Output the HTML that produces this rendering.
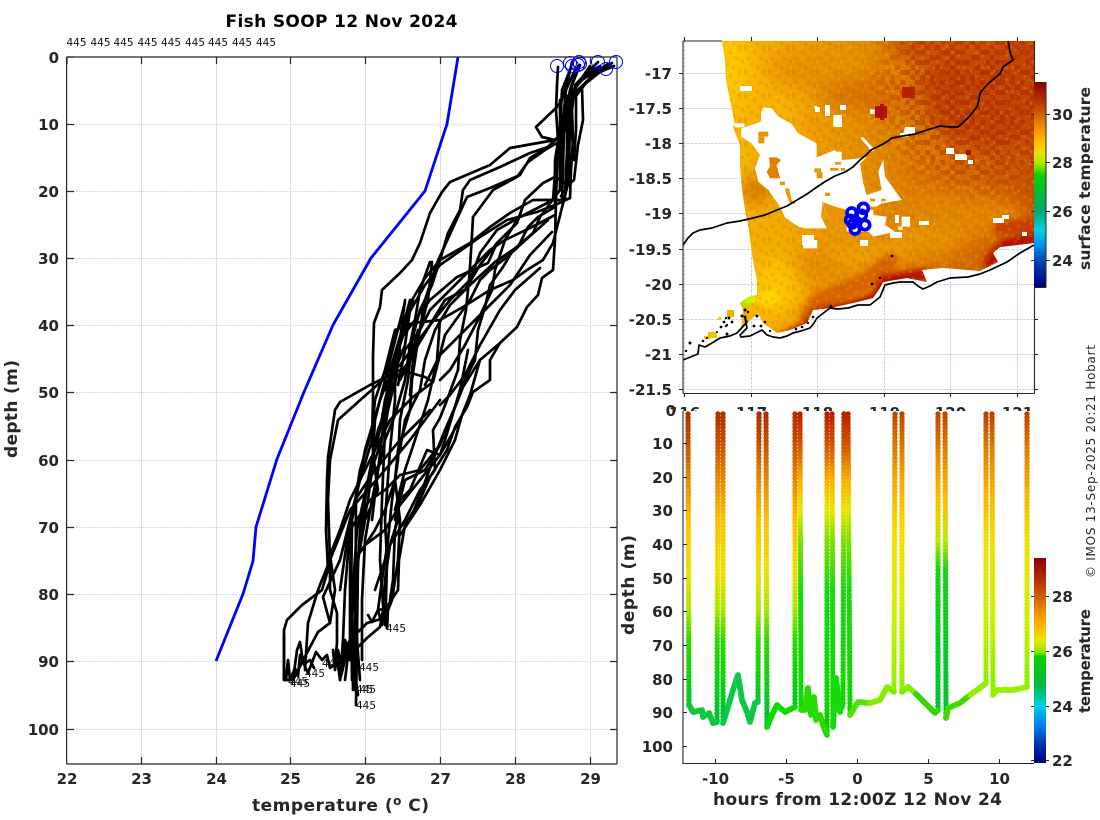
<!DOCTYPE html>
<html><head><meta charset="utf-8"><title>Fish SOOP 12 Nov 2024</title>
<style>
html,body{margin:0;padding:0;background:#fff}
svg{display:block}
text{font-family:"DejaVu Sans","Liberation Sans",sans-serif;fill:#262626}
.t{font-size:15px;font-weight:bold}
.l{font-size:17px;font-weight:bold}
.s{font-size:10.5px;fill:#111}
.pr{fill:none;stroke:#000;stroke-width:2.7;stroke-linejoin:round;stroke-linecap:round}
.d{fill:none;stroke-width:5.4;stroke-linecap:round;stroke-linejoin:round;stroke-dasharray:0 3.4}
.tr{fill:none;stroke-width:5.8;stroke-linejoin:round;stroke-linecap:round}
</style></head><body>
<svg width="1100" height="820" viewBox="0 0 1100 820" xmlns="http://www.w3.org/2000/svg">
<defs>
<clipPath id="d"><polygon points="722,41 1034,41 1034,243 1000,247 993,253 998,262 980,271 967,270 943,268 922,270 927,282 907,278 883,282 880,288 873,298 853,303 830,308 813,310 807,323 790,330 777,333 763,323 758,313 745,325 741,330 743,310 740,303 748,297 757,295 757,280 753,260 750,240 749,230 745,210 742,190 740,165 740,145 733,127 735,125 730,100 726,80 725,60"/></clipPath>
<filter id="b8" x="-30%" y="-30%" width="160%" height="160%"><feGaussianBlur stdDeviation="9"/></filter>
<filter id="b3" x="-30%" y="-30%" width="160%" height="160%"><feGaussianBlur stdDeviation="3"/></filter>
<linearGradient id="h" gradientUnits="userSpaceOnUse" x1="722" y1="0" x2="1034" y2="0">
<stop offset="0" stop-color="#f8bc00"/><stop offset=".2" stop-color="#f0a400"/><stop offset=".5" stop-color="#e08800"/><stop offset=".75" stop-color="#d46c00"/><stop offset="1" stop-color="#c85200"/></linearGradient>
<pattern id="chk" width="40" height="40" patternUnits="userSpaceOnUse">
<path fill="#a81c00" d="M0 0h5v5H0zM10 0h5v5h-5zM20 0h5v5h-5zM35 0h5v5h-5zM5 5h5v5H5zM15 5h5v5h-5zM30 5h5v5h-5zM0 10h5v5H0zM20 10h5v5h-5zM25 10h5v5h-5zM35 10h5v5h-5zM10 15h5v5h-5zM15 15h5v5h-5zM30 15h5v5h-5zM0 20h5v5H0zM5 20h5v5H5zM25 20h5v5h-5zM35 20h5v5h-5zM15 25h5v5h-5zM30 25h5v5h-5zM5 30h5v5H5zM20 30h5v5h-5zM25 30h5v5h-5zM35 30h5v5h-5zM0 35h5v5H0zM10 35h5v5h-5zM30 35h5v5h-5z"/>
</pattern>
<pattern id="nz" width="24" height="24" patternUnits="userSpaceOnUse">
<path fill="#b85000" opacity=".16" d="M0 0h3v3H0zM9 3h3v3H9zM18 0h3v3h-3zM3 9h3v3H3zM15 9h3v3h-3zM21 12h3v3h-3zM6 15h3v3H6zM12 18h3v3h-3zM0 21h3v3H0zM18 21h3v3h-3z"/>
<path fill="#ffd000" opacity=".16" d="M6 0h3v3H6zM15 3h3v3h-3zM21 6h3v3h-3zM9 9h3v3H9zM0 12h3v3H0zM15 15h3v3h-3zM3 18h3v3H3zM21 18h3v3h-3zM9 21h3v3H9z"/>
</pattern>
<radialGradient id="fade" gradientUnits="userSpaceOnUse" cx="985" cy="90" r="125"><stop offset="0" stop-color="#fff"/><stop offset=".65" stop-color="#aaa"/><stop offset="1" stop-color="#000"/></radialGradient>
<mask id="mk" maskUnits="userSpaceOnUse" x="860" y="30" width="180" height="230"><rect x="860" y="30" width="180" height="230" fill="url(#fade)"/></mask>
<linearGradient id="c1" gradientUnits="userSpaceOnUse" x1="0" y1="82" x2="0" y2="287">
<stop offset="0" stop-color="#8b0000"/><stop offset=".088" stop-color="#b83000"/><stop offset=".156" stop-color="#d06000"/><stop offset=".234" stop-color="#f59800"/><stop offset=".297" stop-color="#ffc000"/><stop offset=".341" stop-color="#f0e000"/><stop offset=".395" stop-color="#b0e800"/><stop offset=".454" stop-color="#10d000"/><stop offset=".551" stop-color="#00b840"/><stop offset=".629" stop-color="#00a870"/><stop offset=".722" stop-color="#00d0e0"/><stop offset=".795" stop-color="#0090f0"/><stop offset=".878" stop-color="#0040b0"/><stop offset="1" stop-color="#000080"/></linearGradient>
<linearGradient id="c2" gradientUnits="userSpaceOnUse" x1="0" y1="558" x2="0" y2="763">
<stop offset="0" stop-color="#8b0000"/><stop offset=".107" stop-color="#b83000"/><stop offset=".190" stop-color="#d06000"/><stop offset=".278" stop-color="#f59800"/><stop offset=".351" stop-color="#ffc000"/><stop offset=".400" stop-color="#e8e800"/><stop offset=".459" stop-color="#90e800"/><stop offset=".478" stop-color="#10d000"/><stop offset=".620" stop-color="#00b840"/><stop offset=".722" stop-color="#00d0e0"/><stop offset=".815" stop-color="#0080f0"/><stop offset=".912" stop-color="#0030b0"/><stop offset="1" stop-color="#000080"/></linearGradient>
<linearGradient id="g1" gradientUnits="userSpaceOnUse" x1="0" y1="410" x2="0" y2="730">
<stop offset="0" stop-color="#b02a00"/><stop offset=".094" stop-color="#c84a00"/><stop offset=".219" stop-color="#e88a00"/><stop offset=".344" stop-color="#ffc000"/><stop offset=".5" stop-color="#f0e000"/><stop offset=".625" stop-color="#a8e800"/><stop offset=".719" stop-color="#30d800"/><stop offset=".844" stop-color="#10d010"/><stop offset="1" stop-color="#00b840"/></linearGradient>
<linearGradient id="g2" gradientUnits="userSpaceOnUse" x1="0" y1="410" x2="0" y2="735">
<stop offset="0" stop-color="#b81800"/><stop offset=".123" stop-color="#d86000"/><stop offset=".215" stop-color="#fcb000"/><stop offset=".308" stop-color="#e8e800"/><stop offset=".4" stop-color="#80e000"/><stop offset=".554" stop-color="#18d810"/><stop offset=".892" stop-color="#10d800"/><stop offset="1" stop-color="#18c000"/></linearGradient>
<linearGradient id="g3" gradientUnits="userSpaceOnUse" x1="0" y1="410" x2="0" y2="700">
<stop offset="0" stop-color="#c04000"/><stop offset=".103" stop-color="#d87000"/><stop offset=".241" stop-color="#f8a800"/><stop offset=".414" stop-color="#fcd800"/><stop offset=".655" stop-color="#d8f000"/><stop offset=".931" stop-color="#98f000"/><stop offset="1" stop-color="#80f000"/></linearGradient>
<linearGradient id="g4" gradientUnits="userSpaceOnUse" x1="0" y1="410" x2="0" y2="720">
<stop offset="0" stop-color="#c04000"/><stop offset=".161" stop-color="#e89000"/><stop offset=".29" stop-color="#ffc000"/><stop offset=".419" stop-color="#c0e800"/><stop offset=".516" stop-color="#10d810"/><stop offset="1" stop-color="#00c030"/></linearGradient>
<linearGradient id="g5" gradientUnits="userSpaceOnUse" x1="0" y1="410" x2="0" y2="690">
<stop offset="0" stop-color="#c03800"/><stop offset=".143" stop-color="#e08000"/><stop offset=".286" stop-color="#fab000"/><stop offset=".464" stop-color="#f0e000"/><stop offset=".75" stop-color="#c8f000"/><stop offset=".964" stop-color="#90f000"/><stop offset="1" stop-color="#90f000"/></linearGradient>
</defs>
<rect width="1100" height="820" fill="#fff"/>

<!-- left panel grid -->
<g fill="none" stroke-width="1">
<path stroke="#d3daf5" stroke-dasharray="2 1" d="M67 124.5H617M67 191.5H617M67 258.5H617M67 325.5H617M67 392.5H617M67 460.5H617M67 527.5H617M67 594.5H617M67 661.5H617M67 729.5H617"/>
<path stroke="#d3daf5" stroke-dasharray="2 2" d="M141.5 57V764M216.5 57V764M290.5 57V764M365.5 57V764M440.5 57V764M515.5 57V764M590.5 57V764"/>
<path stroke="#f2dccf" stroke-dasharray="2 2" stroke-dashoffset="2" d="M141.5 57V764M216.5 57V764M290.5 57V764M365.5 57V764M440.5 57V764M515.5 57V764M590.5 57V764"/>
</g>

<!-- blue mean profile -->
<polyline fill="none" stroke="#0000ff" stroke-width="2.8" stroke-linejoin="round" points="458,57 447,124 425,191 371,258 333,325 304,392 277,459 256,527 253,561 243,594 216,661"/>

<!-- profiles -->
<g class="pr">
<polyline class="pr" points="558,67 557,85 556,110 558,140 557,170 556,200 555,240 553,270 542,278 538,295 527,307 517,327 500,343 490,360 490,380 473,392 467,407 455,427 447,450 430,477 420,500 405,525 399,560 398,590 388,605 387,628"/>
<polyline class="pr" points="600,66 585,75 575,85 572,110 573,140 571,170 570,198 555,205 537,212 507,220 480,237 440,265 425,285 405,320 395,360 385,400 380,430 372,460 362,510 358,560 355,620 354,680"/>
<polyline class="pr" points="612,63 590,78 578,90 570,100 568,135 566,170 565,200 533,200 510,213 490,227 470,243 440,260 425,278 412,300 400,345 395,385 378,430 370,470 360,530 356,600 355,660 355,690"/>
<polyline class="pr" points="605,68 590,78 582,88 583,120 578,145 574,180 568,185 555,177 543,183 525,200 517,223 497,243 488,263 457,277 430,300 415,320 410,345 405,380 395,415 385,440 378,470 372,500 365,540 362,600 362,660"/>
<polyline class="pr" points="572,62 568,80 562,100 557,107 536,127 542,137 555,140 510,148 490,165 450,182 442,192 430,213 420,243 412,260 400,273 382,290 380,307 374,323 373,357 373,400 372,440 375,470 378,490 365,520 358,560 357,640 356,705"/>
<polyline class="pr" points="580,65 572,85 568,110 565,130 548,147 530,153 500,167 470,180 463,190 460,210 448,233 440,260 432,285 420,310 412,340 408,380 400,420 398,460 392,500 388,540 382,580 378,610 388,608 387,628"/>
<polyline class="pr" points="575,70 566,90 563,120 560,135 548,147 530,158 520,175 490,188 467,197 455,223 437,263 425,300 418,340 412,380 410,410 398,450 395,480 400,520 398,560 392,600 385,618 367,623 350,640 345,680"/>
<polyline class="pr" points="578,66 570,90 565,120 562,140 545,150 528,162 517,177 493,190 473,217 472,235 470,267 469,280 466,310 460,340 458,370 447,400 440,418 433,430 435,470 420,490 405,520 390,545 385,580 383,610 380,627 367,638 355,650 347,643 340,677"/>
<polyline class="pr" points="598,62 578,82 570,100 572,130 573,150 569,180 553,243 543,260 527,270 513,280 490,290 463,307 440,320 413,323 395,330 385,370 375,400 372,430 360,470 352,520 351,600 352,680"/>
<polyline class="pr" points="590,66 575,88 566,105 561,150 560,190 540,217 533,233 513,250 503,267 490,285 485,307 478,330 475,360 460,390 445,440 440,455 427,450 410,490 400,500 395,530 393,580 390,600"/>
<polyline class="pr" points="570,70 562,90 560,130 555,160 555,207 538,217 528,227 518,247 507,257 490,270 480,280 470,300 445,335 433,382 425,377 400,370 370,385 340,402 335,410 328,457 327,480 326,530 328,570 322,590 302,605 287,620 284,630 284,680"/>
<polyline class="pr" points="566,100 556,160 553,200 520,217 497,230 480,253 470,280 450,300 430,325 415,345 400,365 358,402 338,420 330,460 328,500 330,560 330,590 337,613 337,643 335,662"/>
<polyline class="pr" points="433,382 413,397 390,420 370,460 350,500 340,530 330,555 335,590 330,623 318,632 310,647 293,680"/>
<polyline class="pr" points="440,400 410,440 385,470 350,510 330,560 318,590 308,623 305,670"/>
<polyline class="pr" points="430,410 400,440 375,470 355,500 340,560 323,597 330,623"/>
<polyline class="pr" points="440,445 420,470 400,475 385,490 370,500 350,530 345,590 343,640 340,680"/>
<polyline class="pr" points="460,420 440,455 420,480 400,505 385,530 365,545 355,560"/>
<polyline class="pr" points="500,343 480,360 463,387 450,420 440,445 425,470 405,480 395,520"/>
<polyline class="pr" points="285,680 293,680 297,650 300,642 303,662 308,673 316,652 322,660 327,655 330,668 340,660 345,650 350,640 340,680 338,665 352,650"/>
<polyline class="pr" points="410,310 405,345 395,370 395,400 390,450 385,520 387,560 386,600 385,625"/>
<polyline class="pr" points="405,300 400,340 392,380 385,430 382,500 380,560 383,605"/>
<polyline class="pr" points="405,302 390,360 375,420 372,470 368,500 360,540 354,600 360,680"/>
<polyline class="pr" points="400,350 380,400 365,450 352,520 350,570 350,640 358,695"/>
<polyline class="pr" points="418,330 410,360 395,380 380,445 368,480 357,530 352,600 353,690"/>
<polyline class="pr" points="608,64 592,74 580,80 574,92 570,120 569,170 567,188 561,196"/>
<polyline class="pr" points="596,70 582,80 568,96 564,130 563,170 562,200"/>
<polyline class="pr" points="614,66 600,72 585,84 576,96 576,130 574,160"/>
<polyline class="pr" points="555,215 530,228 505,240 490,250 470,270 450,290 430,310 420,330 413,360 410,395"/>
<polyline class="pr" points="548,220 520,245 495,262 470,285 450,305 435,330 425,360 420,390 405,420 400,450"/>
<polyline class="pr" points="552,232 530,255 510,285 495,300 475,320 460,335 440,355 425,385"/>
<polyline class="pr" points="540,268 515,290 500,310 480,345 465,375 450,395 440,405"/>
<polyline class="pr" points="520,215 505,240 495,270 492,290 478,320 465,345 450,370 440,380"/>
<polyline class="pr" points="497,243 480,265 465,290 445,300 430,325 418,345 400,380"/>
<polyline class="pr" points="430,262 420,290 415,320 400,340 395,370 385,390"/>
<polyline class="pr" points="432,262 428,300 420,330 405,350 398,385"/>
<polyline class="pr" points="413,300 405,330 395,360 388,400 383,420"/>
<polyline class="pr" points="410,300 402,330 390,370 384,420 378,470 372,520"/>
<polyline class="pr" points="440,320 437,360 428,400 415,440 405,470 395,510"/>
<polyline class="pr" points="468,350 458,400 445,430 433,460 422,490 410,520"/>
<polyline class="pr" points="480,360 470,395 462,415 455,440 440,470 420,505 400,535"/>
<polyline class="pr" points="372,440 360,480 350,520 345,555 340,590"/>
<polyline class="pr" points="395,480 385,510 375,530 362,550"/>
<polyline class="pr" points="398,520 385,560 375,590"/>
<polyline class="pr" points="353,640 350,660 345,640 342,672 338,650 335,670 333,650"/>
<polyline class="pr" points="387,628 385,612 382,625 378,610 372,622 368,615"/>
<polyline class="pr" points="286,680 288,660 290,680 295,668 298,676 300,655 304,664 310,660 314,668"/>
<polyline class="pr" stroke-width="4" points="560,100 560,190"/>
<polyline class="pr" stroke-width="4" points="567,100 567,180"/>
<polyline class="pr" stroke-width="4" points="356,500 355,680"/>
<polyline class="pr" stroke-width="4" points="284,635 284,680"/>
</g>

<!-- circles -->
<g fill="none" stroke="#0000ff" stroke-width="1">
<circle cx="557" cy="66" r="6.5"/><circle cx="570" cy="63" r="6.5"/><circle cx="572" cy="66" r="6.5"/><circle cx="579" cy="62" r="6.5"/><circle cx="578" cy="65" r="6.5"/><circle cx="580" cy="64" r="6.5"/><circle cx="598" cy="62" r="6.5"/><circle cx="606" cy="69" r="6.5"/><circle cx="616" cy="62" r="6.5"/>
</g>

<!-- left axes -->
<g fill="none" stroke="#262626" stroke-width="1.2">
<path d="M66.6 57H617M617 57V764M66.6 57V764M66.6 764H617"/>
<path d="M67 57H74M67 124.5H74M67 191.5H74M67 258.5H74M67 325.5H74M67 392.5H74M67 460.5H74M67 527.5H74M67 594.5H74M67 661.5H74M67 729.5H74"/>
<path d="M617 124.5H610M617 191.5H610M617 258.5H610M617 325.5H610M617 392.5H610M617 460.5H610M617 527.5H610M617 594.5H610M617 661.5H610M617 729.5H610"/>
<path d="M67 57V64M141.5 57V64M216.5 57V64M290.5 57V64M365.5 57V64M440.5 57V64M515.5 57V64M590.5 57V64"/>
<path d="M141.5 764V757M216.5 764V757M290.5 764V757M365.5 764V757M440.5 764V757M515.5 764V757M590.5 764V757"/>
</g>
<g class="t" text-anchor="end">
<text class="t" x="59" y="63">0</text><text class="t" x="59" y="130">10</text><text class="t" x="59" y="197">20</text><text class="t" x="59" y="264">30</text><text class="t" x="59" y="331">40</text><text class="t" x="59" y="398">50</text><text class="t" x="59" y="466">60</text><text class="t" x="59" y="533">70</text><text class="t" x="59" y="600">80</text><text class="t" x="59" y="667">90</text><text class="t" x="59" y="735">100</text>
</g>
<g text-anchor="middle">
<text class="t" x="67" y="784">22</text><text class="t" x="141.5" y="784">23</text><text class="t" x="216.5" y="784">24</text><text class="t" x="290.5" y="784">25</text><text class="t" x="365.5" y="784">26</text><text class="t" x="440.5" y="784">27</text><text class="t" x="515.5" y="784">28</text><text class="t" x="590.5" y="784">29</text>
</g>
<text class="l" x="341.5" y="27" text-anchor="middle" textLength="232" style="fill:#000">Fish SOOP 12 Nov 2024</text>
<text class="l" x="252" y="811" textLength="177">temperature (<tspan dy="-6" font-size="12">o</tspan><tspan dy="6"> C)</tspan></text>
<text class="l" transform="translate(17,458) rotate(-90)" textLength="98">depth (m)</text>

<g>
<text class="s" x="66.5" y="46">445</text><text class="s" x="90.5" y="46">445</text><text class="s" x="113.5" y="46">445</text><text class="s" x="137.5" y="46">445</text><text class="s" x="161" y="46">445</text><text class="s" x="185" y="46">445</text><text class="s" x="208" y="46">445</text><text class="s" x="232" y="46">445</text><text class="s" x="256" y="46">445</text>
<text class="s" x="386" y="632">445</text><text class="s" x="359" y="671">445</text><text class="s" x="353" y="693">445</text><text class="s" x="356" y="693">445</text><text class="s" x="356" y="709">445</text><text class="s" x="288" y="685">445</text><text class="s" x="290" y="687">445</text><text class="s" x="305" y="677">445</text><text class="s" x="322" y="667">445</text>
</g>

<!-- MAP -->
<g fill="none" stroke="#c9d2f2" stroke-width="1" stroke-dasharray="3 1">
<path d="M683 73.5H1034M683 108.5H1034M683 143.5H1034M683 178.5H1034M683 213.5H1034M683 249.5H1034M683 284.5H1034M683 319.5H1034M683 354.5H1034M683 389.5H1034"/>
<path d="M684.5 41V393M751.5 41V393M817.5 41V393M884.5 41V393M950.5 41V393M1017.5 41V393"/>
</g>
<g clip-path="url(#d)">
<rect x="700" y="30" width="340" height="320" fill="url(#h)"/>
<g filter="url(#b8)">
<ellipse cx="733" cy="70" rx="14" ry="42" fill="#fcc800"/>
<ellipse cx="770" cy="110" rx="30" ry="40" fill="#f6b000"/>
<ellipse cx="810" cy="70" rx="40" ry="22" fill="#e89000"/>
<ellipse cx="880" cy="95" rx="60" ry="18" fill="#d87200"/>
<ellipse cx="990" cy="85" rx="70" ry="65" fill="#c04400"/>
<ellipse cx="950" cy="45" rx="60" ry="20" fill="#c85000"/>
<ellipse cx="960" cy="215" rx="65" ry="25" fill="#e08400"/>
<ellipse cx="755" cy="190" rx="12" ry="15" fill="#cf6a00"/>
<ellipse cx="775" cy="250" rx="25" ry="25" fill="#f2ac00"/>
<ellipse cx="820" cy="265" rx="30" ry="16" fill="#e48c00"/>
<ellipse cx="870" cy="255" rx="40" ry="10" fill="#f0a000"/>
<ellipse cx="925" cy="240" rx="40" ry="14" fill="#e89400"/>
</g>
<g filter="url(#b3)" fill="none" stroke-linecap="round">
<polyline stroke="#d86400" stroke-width="18" points="808,315 820,300 840,292 865,283 890,262"/>
<polyline stroke="#b41000" stroke-width="12" points="785,338 805,328 818,313 850,307 875,299 885,280 925,275"/>
<polyline stroke="#b41000" stroke-width="12" points="990,262 1005,245 1036,238"/>
<polyline stroke="#c83c00" stroke-width="14" points="1000,228 1036,225"/>
</g>
<ellipse cx="775" cy="288" rx="24" ry="28" fill="#fcc400" filter="url(#b8)"/>
<ellipse cx="768" cy="298" rx="11" ry="8" fill="#fcd800" filter="url(#b3)"/>
<rect x="700" y="30" width="340" height="320" fill="url(#nz)"/>
<rect x="860" y="30" width="180" height="230" fill="url(#chk)" opacity=".5" mask="url(#mk)"/>
<rect x="902" y="87" width="13" height="11" fill="#b42000"/>
<rect x="875" y="106" width="12" height="12" fill="#b01010"/>
<rect x="880" y="104" width="4" height="16" fill="#b01010"/>
<rect x="738" y="298" width="14" height="8" fill="#a8e400"/>
<rect x="745" y="296" width="10" height="7" fill="#d8ec00"/>
</g>
<rect x="708" y="332" width="9" height="6" fill="#f0c400"/>
<rect x="704" y="336" width="6" height="3" fill="#f0c400"/>
<rect x="727" y="310" width="7" height="7" fill="#f0b000"/>
<rect x="718" y="317" width="3" height="3" fill="#f0d000"/>
<!-- clouds -->
<g transform="translate(735,100) scale(.33333)">
<path fill="#fff" d="M20 85L78 65L78 40L85 22L110 25L130 50L170 72L190 100L245 130L245 172L300 150L320 180L345 178L395 172L375 190L385 250L395 285L440 270L430 215L445 178L450 230L500 300L440 310L415 325L415 345L455 350L450 375L480 395L415 410L400 395L340 395L300 385L275 345L262 310L258 350L275 385L245 385L210 385L190 380L150 352L135 320L100 270L70 245L60 205L75 165L50 130L18 110Z"/>
<g fill="#e99400">
<rect x="70" y="95" width="30" height="15"/><rect x="70" y="110" width="18" height="20"/>
<path fill="#e08000" d="M102 172L125 172L138 180L125 195L135 235L105 235L95 215L105 200Z"/>
<rect x="238" y="205" width="20" height="12"/><rect x="245" y="217" width="18" height="18"/>
<rect x="285" y="204" width="25" height="8"/><rect x="318" y="204" width="12" height="8"/>
<path d="M150 265L162 265L170 300L182 312L165 312L155 285Z"/>
<rect x="135" y="245" width="15" height="10"/><rect x="270" y="278" width="15" height="10"/>
<path d="M262 306L295 318L335 330L335 395L300 385L275 345Z"/>
<rect x="300" y="186" width="18" height="8"/>
<rect x="405" y="320" width="24" height="10"/><rect x="405" y="296" width="15" height="8"/><rect x="438" y="296" width="14" height="8"/>
</g>
<g fill="#fff">
<rect x="295" y="45" width="22" height="35"/><rect x="238" y="18" width="8" height="8"/><rect x="270" y="15" width="15" height="20"/>
<path d="M375 112L385 112L420 150L410 155Z"/><rect x="405" y="28" width="14" height="14"/>
<path d="M505 100L515 85L540 85L540 105Z"/>
<rect x="295" y="155" width="25" height="30"/>
<rect x="500" y="350" width="25" height="30"/><rect x="205" y="420" width="42" height="25"/>
<rect x="0" y="70" width="28" height="12"/>
<rect x="490" y="380" width="12" height="10"/>
</g>
</g>
<g fill="#fff">
<rect x="840" y="105" width="6" height="5"/>
<rect x="825" y="110" width="5" height="6"/>
<rect x="835" y="115" width="7" height="12"/>
<rect x="740" y="86" width="12" height="5"/>
<rect x="815" y="107" width="5" height="5"/>
<rect x="946" y="148" width="8" height="6"/><rect x="955" y="154" width="12" height="6"/><rect x="968" y="160" width="5" height="4"/>
<rect x="919" y="221" width="10" height="4"/><rect x="993" y="218" width="11" height="5"/><rect x="1002" y="215" width="7" height="4"/>
<path d="M905 127L915 127L915 133L903 134Z"/><rect x="900" y="133" width="8" height="4"/>
<rect x="1022" y="232" width="5" height="4"/>
<rect x="785" y="155" width="5" height="5"/>
<rect x="895" y="215" width="4" height="8"/>
<rect x="802" y="235" width="12" height="10"/><rect x="890" y="232" width="12" height="6"/><rect x="860" y="240" width="8" height="6"/>
</g>
<rect x="966" y="150" width="5" height="5" fill="#a81010"/>
<!-- coast -->
<g fill="none" stroke="#000" stroke-width="1.7" stroke-linejoin="round">
<polyline points="683,245 688,238 693,233 700,230 712,228 727,223 740,221 753,218 765,215 777,210 787,206 797,200 807,194 817,187 826,181 835,176 845,172 853,167 860,160 866,155 871,150 877,147 885,143 892,138 903,136 915,134 927,130 940,126 950,127 958,127 968,118 977,107 979,100 980,93 985,87 990,82 1000,74 1003,67 1013,60 1010,52 1008,41"/>
<polyline points="683,360 693,356 698,354 699,345 705,347 712,343 720,338 730,336 737,333 747,322 745,318 747,328 740,335 741,337 750,336 758,332 762,330 767,335 773,337 780,338 787,336 793,333 801,331 810,328 814,323 817,318 830,308 838,309 848,308 858,305 870,305 875,301 880,297 885,285 893,283 900,282 913,282 918,286 923,289 930,286 937,282 950,278 968,277 980,274 990,270 1007,262 1020,253 1034,245"/>
</g>
<g fill="#000">
<circle cx="686" cy="351" r="1.2"/><circle cx="690" cy="343" r="1.5"/><circle cx="703" cy="341" r="1.3"/><circle cx="707" cy="338" r="1.1"/><circle cx="717" cy="332" r="1"/><circle cx="721" cy="327" r="1.4"/><circle cx="724" cy="322" r="1.4"/><circle cx="726" cy="318" r="1.2"/><circle cx="729" cy="318" r="1.4"/><circle cx="726" cy="326" r="1.2"/><circle cx="732" cy="322" r="1.4"/><circle cx="727" cy="334" r="1.5"/><circle cx="742" cy="316" r="1.5"/><circle cx="745" cy="317" r="1.4"/><circle cx="745" cy="310" r="1.5"/><circle cx="748" cy="312" r="1.2"/><circle cx="757" cy="316" r="1.5"/><circle cx="754" cy="326" r="1.4"/><circle cx="761" cy="326" r="1.4"/><circle cx="765" cy="322" r="1.3"/><circle cx="770" cy="331" r="1.1"/><circle cx="796" cy="329" r="1.3"/><circle cx="802" cy="327" r="1.3"/><circle cx="808" cy="323" r="1.2"/><circle cx="813" cy="317" r="1.3"/><circle cx="831" cy="306" r="1.3"/><circle cx="872" cy="284" r="1.4"/><circle cx="880" cy="278" r="1.2"/><circle cx="892" cy="256" r="1.4"/><circle cx="727" cy="325" r="1.2"/>
</g>
<!-- blue cluster on map -->
<g transform="translate(735,100) scale(.33333)" fill="none" stroke="#0000f0" stroke-width="11">
<circle cx="350" cy="338" r="14"/><circle cx="346" cy="360" r="14"/><circle cx="385" cy="325" r="15"/><circle cx="380" cy="345" r="14"/><circle cx="360" cy="388" r="14"/><circle cx="390" cy="375" r="14"/><circle cx="352" cy="372" r="12"/><circle cx="368" cy="360" r="6"/>
</g>
<!-- map axes -->
<g fill="none" stroke="#262626" stroke-width="1.1">
<path d="M683 41H722M683 41V393.5M1034.5 41V393.5M683 393.5H1034.5"/>
<path d="M679 73.5H683M679 108.5H683M679 143.5H683M679 178.5H683M679 213.5H683M679 249.5H683M679 284.5H683M679 319.5H683M679 354.5H683M679 389.5H683"/>
<path d="M1034 73.5H1038M1034 354.5H1038M1034 319.5H1038M1034 389.5H1038"/>
<path d="M684.5 37V41M751.5 37V41M817.5 37V41M884.5 37V41M950.5 37V41M1017.5 37V41"/>
<path d="M684.5 393V397M751.5 393V397M817.5 393V397M884.5 393V397M950.5 393V397M1017.5 393V397"/>
</g>
<g text-anchor="end">
<text class="t" x="672" y="79">-17</text><text class="t" x="672" y="114">-17.5</text><text class="t" x="672" y="149">-18</text><text class="t" x="672" y="184">-18.5</text><text class="t" x="672" y="219">-19</text><text class="t" x="672" y="255">-19.5</text><text class="t" x="672" y="290">-20</text><text class="t" x="672" y="325">-20.5</text><text class="t" x="672" y="360">-21</text><text class="t" x="672" y="395">-21.5</text>
</g>
<g text-anchor="middle">
<text class="t" x="684.5" y="418">116</text><text class="t" x="751.5" y="418">117</text><text class="t" x="817.5" y="418">118</text><text class="t" x="884.5" y="418">119</text><text class="t" x="950.5" y="418">120</text><text class="t" x="1017.5" y="418">121</text>
</g>
<rect x="676" y="411" width="360" height="356" fill="#fff"/>
<rect x="660" y="411" width="16" height="10" fill="#fff"/>

<!-- cbar 1 -->
<rect x="1034" y="82" width="12" height="205" fill="url(#c1)"/>
<path fill="none" stroke="#262626" stroke-width="1" d="M1034 287.5H1046M1046 82V287.5M1046 114.5H1050M1046 162.5H1050M1046 211.5H1050M1046 260.5H1050M1034 114.5H1031M1034 162.5H1031M1034 211.5H1031M1034 260.5H1031"/>
<g><text class="t" x="1052" y="120">30</text><text class="t" x="1052" y="168">28</text><text class="t" x="1052" y="217">26</text><text class="t" x="1052" y="266">24</text></g>
<text class="t" transform="translate(1090,270) rotate(-90)" textLength="183" style="font-size:15.5px">surface temperature</text>

<!-- lower panel -->
<g>
<path class="d" stroke="url(#g1)" d="M688 414L689 705"/><path class="d" stroke="url(#g1)" d="M718 414L717 722"/>
<path class="d" stroke="url(#g1)" d="M723 414L723 723"/><path class="d" stroke="url(#g1)" d="M759 414L758 702"/>
<path class="d" stroke="url(#g1)" d="M766 414L767 727"/><path class="d" stroke="url(#g1)" d="M795 414L795 707"/>
<path class="d" stroke="url(#g2)" d="M800 414L801 710"/><path class="d" stroke="url(#g2)" d="M827 414L827 735"/>
<path class="d" stroke="url(#g2)" d="M832 414L833 727"/><path class="d" stroke="url(#g2)" d="M844 414L843 703"/>
<path class="d" stroke="url(#g2)" d="M848 414L850 715"/><path class="d" stroke="url(#g3)" d="M895 414L894 692"/>
<path class="d" stroke="url(#g3)" d="M902 414L902 692"/><path class="d" stroke="url(#g4)" d="M938 414L938 710"/>
<path class="d" stroke="url(#g4)" d="M945 414L946 718"/><path class="d" stroke="url(#g5)" d="M986 414L986 683"/>
<path class="d" stroke="url(#g5)" d="M992 414L993 695"/><path class="d" stroke="url(#g5)" d="M1027 414L1027 687"/>
<polyline class="tr" stroke="#10c840" points="689,705 693,712 702,710 703,717 709,713 713,723 717,722"/>
<polyline class="tr" stroke="#0cc84a" points="723,723 728,707 733,690 738,675 742,700 747,712 750,722 755,703 758,702"/>
<polyline class="tr" stroke="#10d800" points="767,727 772,715 777,705 785,712 795,707"/>
<polyline class="tr" stroke="#28dc00" points="801,710 805,710 808,688 811,715 814,697 816,720 820,715 823,725 827,735"/>
<polyline class="tr" stroke="#18d810" points="833,727 836,678 840,712 843,703"/>
<polyline class="tr" stroke="#50e400" points="850,715 858,702 870,703"/>
<polyline class="tr" stroke="#88ec00" points="870,703 880,700 887,687 894,692"/>
<polyline class="tr" stroke="#88ec00" points="902,692 908,687 916,694"/>
<polyline class="tr" stroke="#30d800" points="916,694 922,700 930,708 935,713 938,710"/>
<polyline class="tr" stroke="#40dc00" points="946,718 948,708 960,703 970,695"/>
<polyline class="tr" stroke="#98ec00" points="970,695 980,688 986,683"/>
<polyline class="tr" stroke="#98f000" points="993,695 997,690 1013,690 1027,687"/>
</g>
<g fill="none" stroke="#262626" stroke-width="1.1">
<path d="M683 411V763.5H1034"/>
<path d="M683 443.5H687M683 477.5H687M683 510.5H687M683 544.5H687M683 578.5H687M683 611.5H687M683 645.5H687M683 679.5H687M683 712.5H687M683 746.5H687"/>
<path d="M715.5 763V759M786.5 763V759M857.5 763V759M928.5 763V759M999.5 763V759"/>
</g>
<g text-anchor="end">
<text class="t" x="676" y="416">0</text><text class="t" x="673" y="449">10</text><text class="t" x="673" y="483">20</text><text class="t" x="673" y="516">30</text><text class="t" x="673" y="550">40</text><text class="t" x="673" y="584">50</text><text class="t" x="673" y="617">60</text><text class="t" x="673" y="651">70</text><text class="t" x="673" y="685">80</text><text class="t" x="673" y="718">90</text><text class="t" x="673" y="752">100</text>
</g>
<g text-anchor="middle">
<text class="t" x="715.5" y="784">-10</text><text class="t" x="786.5" y="784">-5</text><text class="t" x="857.5" y="784">0</text><text class="t" x="928.5" y="784">5</text><text class="t" x="999.5" y="784">10</text>
</g>
<text class="l" x="713" y="805" textLength="289">hours from 12:00Z 12 Nov 24</text>
<text class="l" transform="translate(634,635) rotate(-90)" textLength="100">depth (m)</text>

<!-- cbar 2 -->
<rect x="1034" y="558" width="12" height="205" fill="url(#c2)"/>
<path fill="none" stroke="#262626" stroke-width="1" d="M1034 596.5H1031M1034 651.5H1031M1034 706.5H1031M1034 760.5H1031M1046 596.5H1049M1046 651.5H1049M1046 706.5H1049M1046 760.5H1049"/>
<g><text class="t" x="1052" y="602">28</text><text class="t" x="1052" y="657">26</text><text class="t" x="1052" y="712">24</text><text class="t" x="1052" y="766">22</text></g>
<text class="t" transform="translate(1090,713) rotate(-90)" textLength="104">temperature</text>

<text transform="translate(1095,578) rotate(-90)" font-size="12" textLength="233">© IMOS 13-Sep-2025 20:21 Hobart</text>
</svg>
</body></html>
